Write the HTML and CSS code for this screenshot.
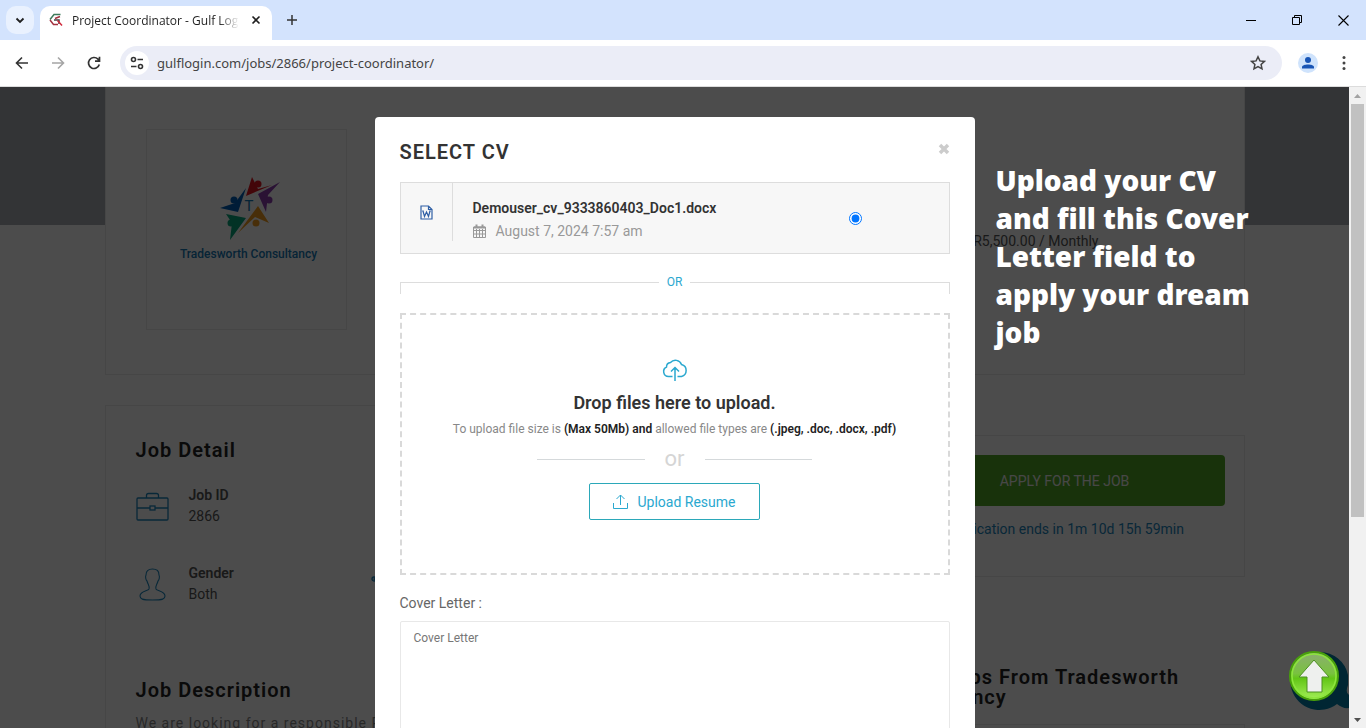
FILE: index.html
```html
<!DOCTYPE html>
<html lang="en">
<head>
  <meta charset="UTF-8">
  <meta name="viewport" content="width=device-width, initial-scale=1.0">
  <title>Project Coordinator - Gulf Login</title>
  <link rel="stylesheet" href="styles.css">
</head>
<body>
  <!-- Browser tabs -->
  <div class="tab-strip">
    <button class="tab-search" aria-label="Search tabs">
      <svg width="10" height="10" viewBox="0 0 10 10"><path d="M1.500 3.500 5 7l3.500-3.500" fill="none" stroke="#1f1f1f" stroke-width="1.800"/></svg>
    </button>
    <div class="tab">
      <svg width="14" height="14" viewBox="0 0 14 14" fill="none" stroke-width="1.500">
        <path d="M11.500 1.500H5L1 6.500" stroke="#3d7a5a"/>
        <path d="M11 3.500 6 5.500M1 7l3.500 4.500H9" stroke="#a33340"/>
        <path d="M5 7h5v4" stroke="#444"/>
        <path d="m8.500 7.500 4.500 5" stroke="#d0283a"/>
      </svg>
      <span class="tab-title">Project Coordinator - Gulf Login</span>
      <button class="tab-close" aria-label="Close tab">
        <svg width="10" height="10" viewBox="0 0 10 10"><path d="m1.500 1.500 7 7m0-7-7 7" stroke="#1f1f1f" stroke-width="1.600"/></svg>
      </button>
    </div>
    <button class="new-tab" aria-label="New tab">
      <svg width="12" height="12" viewBox="0 0 12 12"><path d="M6 1v10M1 6h10" stroke="#333" stroke-width="1.500"/></svg>
    </button>
    <div class="window-buttons">
      <button aria-label="Minimize"><svg width="10" height="10" viewBox="0 0 10 10"><path d="M0 5.500h10" stroke="#000"/></svg></button>
      <button aria-label="Restore"><svg width="10" height="10" viewBox="0 0 10 10" fill="none" stroke="#000"><path d="M.5 2.500h7v7h-7zM2.500 2.500v-2h7v7h-2"/></svg></button>
      <button aria-label="Close"><svg width="11" height="11" viewBox="0 0 11 11"><path d="m.5.5 10 10m0-10-10 10" stroke="#000" stroke-width="1.100"/></svg></button>
    </div>
  </div>

  <!-- Browser toolbar -->
  <div class="toolbar">
    <button class="nav-button" aria-label="Back">
      <svg width="14" height="14" viewBox="0 0 14 14" fill="none" stroke="#333" stroke-width="1.600"><path d="M13 7H2M7 1.500 1.500 7 7 12.500"/></svg>
    </button>
    <button class="nav-button" aria-label="Forward">
      <svg width="14" height="14" viewBox="0 0 14 14" fill="none" stroke="#a5a5a5" stroke-width="1.600"><path d="M1 7h11M7 1.500 12.500 7 7 12.500"/></svg>
    </button>
    <button class="nav-button" aria-label="Reload">
      <svg width="14" height="14" viewBox="0 0 14 14" fill="none" stroke="#333" stroke-width="1.700"><path d="M12.300 8.500A5.500 5.500 0 1 1 11 3.200L12.500 5M12.500.8V5.200H8"/></svg>
    </button>
    <div class="address">
      <button class="site-info" aria-label="Site information">
        <svg width="14" height="14" viewBox="0 0 14 14" fill="none" stroke="#333" stroke-width="1.600"><circle cx="3.500" cy="3.500" r="2"/><path d="M7.500 3.500H13M1 10.500h5.500"/><circle cx="10.500" cy="10.500" r="2"/></svg>
      </button>
      <input class="url" type="text" aria-label="Address" value="gulflogin.com/jobs/2866/project-coordinator/">
      <button class="star" aria-label="Bookmark">
        <svg width="16" height="16" viewBox="0 0 16 16"><path d="m8 1.800 1.900 4.100 4.500.5-3.300 3 .9 4.500L8 11.600l-4 2.300.9-4.500-3.300-3 4.500-.5z" fill="none" stroke="#444" stroke-width="1.500"/></svg>
      </button>
    </div>
    <button class="profile" aria-label="Profile">
      <svg width="20" height="20" viewBox="0 0 20 20"><circle cx="10" cy="10" r="10" fill="#cfe3fc"/><circle cx="10" cy="7" r="3" fill="#1754b5"/><path d="M4 15.500v-1.500c0-3.500 12-3.500 12 0v1.500z" fill="#1754b5"/></svg>
    </button>
    <button class="menu" aria-label="Menu">
      <svg width="4" height="16" viewBox="0 0 4 16" fill="#444"><circle cx="2" cy="2.500" r="1.500"/><circle cx="2" cy="8" r="1.500"/><circle cx="2" cy="13.500" r="1.500"/></svg>
    </button>
  </div>

  <div class="viewport">
    <div class="page">
      <div class="hero card">
        <div class="company">
          <svg width="62" height="64" viewBox="0 0 62 64">
            <path d="M32 0 26 19 52 8 38 12z" fill="#e0141f"/><circle cx="38" cy="7" r="3.500" fill="#e0141f"/>
            <path d="M60 5 38 17l8 18 2-17z" fill="#8e3fb0"/><circle cx="49" cy="23" r="3.500" fill="#8e3fb0"/>
            <path d="M26 11 18 35 0 31l15-5z" fill="#0060b8"/><circle cx="14" cy="23" r="3.500" fill="#0060b8"/>
            <path d="m6 37 20 4L10 63l2-17z" fill="#08a87c"/><circle cx="11" cy="46" r="3.500" fill="#08a87c"/>
            <path d="M38 29 49 46 35 40 18 56z" fill="#f09c1e"/><circle cx="36" cy="46" r="3.500" fill="#f09c1e"/>
            <text x="29" y="34" text-anchor="middle" font-family="Roboto" font-size="15" fill="#1578b4">T</text>
          </svg>
          <span class="company-name">Tradesworth Consultancy</span>
        </div>
        <span class="salary">INR5,500.00 / Monthly</span>
      </div>

      <div class="columns">
        <div class="main-column card">
          <h2>Job Detail</h2>
          <div class="details">
            <div class="detail">
              <svg width="33" height="33" viewBox="0 0 33 33" fill="none" stroke="#1d86bd" stroke-width="1.300"><rect x="1" y="8" width="31" height="22" rx="1"/><path d="M10.500 8V5.500q0-2 2-2h8q2 0 2 2V8M1 18h13m5 0h13"/><rect x="14" y="16" width="5" height="4"/></svg>
              <div><strong>Job ID</strong><br>2866</div>
            </div>
            <div class="detail gender">
              <svg width="33" height="33" viewBox="0 0 33 33" fill="none" stroke="#1d86bd" stroke-width="1.100"><path d="M16.500 1C12 1 10 3 10 7c-1 2 0 5 1 6 1 4 3 5 2 8-1 2-9 2-9 7 0 3 2 4 12.500 4S29 31 29 28c0-5-8-5-9-7-1-3 1-4 2-8 1-1 2-4 1-6 0-4-2-6-6.500-6z"/></svg>
              <div><strong>Gender</strong><br>Both</div>
            </div>
            <div class="detail qualification">
              <svg width="33" height="33" viewBox="0 0 33 33" fill="none" stroke="#1d86bd" stroke-width="1.300"><path d="m3 11 14-7 15 7-15 7zM7 15v8q9 6 18 0v-8"/><circle cx="3" cy="11" r="2"/></svg>
            </div>
          </div>
          <h2>Job Description</h2>
          <p class="description">We are looking for a responsible Project Coordinator</p>
        </div>
        <div class="side-column">
          <div class="apply card">
            <button class="apply-button">APPLY FOR THE JOB</button>
            <p>Application ends in 1m 10d 15h 59min</p>
          </div>
          <h2>Other Jobs From Tradesworth Consultancy</h2>
          <div class="other-jobs card"></div>
        </div>
      </div>

      <svg class="chat" width="60" height="60" viewBox="0 0 60 60"><path d="M31 0a29 29 0 1 0 17 52q6 5 12 4V43q-4-2-1-10V23A29 29 0 0 0 31 0z" fill="#007fac"/></svg>

      <!-- Apply popup -->
      <div class="overlay">
        <form class="modal">
          <div class="modal-header">
            <h3>SELECT CV</h3>
            <button type="button" class="modal-close" aria-label="Close">
              <svg width="12" height="12" viewBox="0 0 12 12"><path d="m2 2 8 8m0-8-8 8" stroke="#ccc" stroke-width="3.500"/></svg>
            </button>
          </div>

          <div class="cv">
            <div class="cv-icon">
              <svg width="13" height="15" viewBox="0 0 13 15" fill="none" stroke="#2f5fa5" stroke-width="1.200"><path d="M1 1h7.500L12 4.500V14H1zM8.500 1v3.500H12"/><path d="m3 6 1.500 5.500L6.500 7l2 4.500L10 6M2.200 6h1.600M9.200 6h1.600"/></svg>
            </div>
            <div class="cv-info">
              <label for="cv1">Demouser_cv_9333860403_Doc1.docx</label>
              <span class="cv-date">
                <svg width="13" height="14" viewBox="0 0 13 14" fill="none" stroke="#999"><path d="M.5 3h12v10.500H.5z"/><path d="M.5 6.500h12M.5 10h12M3.500 5v8.500M6.500 5v8.500M9.500 5v8.500"/><path d="M1 3.500h11" stroke-width="2"/><path d="M3.500.5v3M9.500.5v3" stroke-width="2"/></svg>
                August 7, 2024 7:57 am
              </span>
            </div>
            <input type="radio" id="cv1" name="cv" checked>
          </div>

          <div class="or-frame">
            <span class="frame-left"></span>
            <span class="frame-text">OR</span>
            <span class="frame-right"></span>
          </div>

          <div class="dropzone">
            <svg width="26" height="24" viewBox="0 0 26 24" fill="none" stroke="#2ba8cf" stroke-width="1.500"><path d="M10.500 18.500H6.500A5 5 0 0 1 4.500 9 4.500 4.500 0 0 1 8.500 4.500a6.500 6.500 0 0 1 11 2 6.200 6.200 0 0 1 0 12h-4M13 23V9.500M9 13.500l4-4 4 4"/></svg>
            <h4>Drop files here to upload.</h4>
            <p>To upload file size is <strong>(Max 50Mb) and</strong> allowed file types are <strong>(.jpeg, .doc, .docx, .pdf)</strong></p>
            <div class="or-line"><span>or</span></div>
            <button type="button" class="upload-button">
              <svg width="15" height="15" viewBox="0 0 15 15" fill="none" stroke="#2ba8cf"><path d="M.5 9v5.500h14V9M7.500 11V1M3.500 5l4-4 4 4"/></svg>
              Upload Resume
            </button>
          </div>

          <label class="letter-label" for="letter">Cover Letter :</label>
          <textarea id="letter" placeholder="Cover Letter"></textarea>
        </form>
      </div>

      <p class="hint">Upload your CV and fill this Cover Letter field to apply your dream job</p>

      <a class="back-to-top" href="#" aria-label="Back to top">
        <svg width="50" height="52" viewBox="0 0 50 52">
          <defs>
            <linearGradient id="ball" x1="0" y1="0" x2="0" y2="1"><stop offset="0" stop-color="#8cad72"/><stop offset=".45" stop-color="#79c23f"/><stop offset=".55" stop-color="#62c516"/><stop offset="1" stop-color="#a5f05a"/></linearGradient>
          </defs>
          <circle cx="25" cy="26" r="24" fill="url(#ball)" stroke="#48a00b" stroke-width="2"/>
          <circle cx="25" cy="26" r="22" fill="none" stroke="#8ce63b" stroke-width="1.500"/>
          <path d="M25 10 10 27h8v15h15V27h7z" fill="#eef0ee" stroke="#4d8f23"/>
        </svg>
      </a>
    </div>

    <div class="scrollbar">
      <svg width="17" height="17" viewBox="0 0 17 17"><path d="m5 11 3.500-4 3.500 4z" fill="#a3a3a3"/></svg>
      <div class="track"><div class="thumb"></div></div>
      <svg width="17" height="17" viewBox="0 0 17 17"><path d="m5 7 3.500 4L12 7z" fill="#505050"/></svg>
    </div>
  </div>
</body>
</html>
```
FILE: styles.css
```css
* {
  box-sizing: border-box;
}
body {
  margin: 0;
  height: 100vh;
  display: flex;
  flex-direction: column;
  overflow: hidden;
  font-family: Roboto, Arial, sans-serif;
  font-size: 14px;
  color: #666;
}
button {
  font-family: inherit;
  border: none;
  background: none;
  padding: 0;
  cursor: pointer;
}
svg {
  display: block;
  flex-shrink: 0;
}
h2, h3, h4, p {
  margin: 0;
}

/* browser */
.tab-strip {
  display: flex;
  height: 40px;
  padding-left: 6px;
  background-color: #d3e3fd;
}
.tab-search {
  display: grid;
  place-items: center;
  width: 28px;
  height: 28px;
  margin: 6px 6px 0 0;
  border-radius: 10px;
  background-color: #e9f1fe;
}
.tab {
  display: flex;
  align-items: center;
  width: 232px;
  margin-top: 6px;
  padding: 0 11px 6px 9px;
  border-radius: 10px 10px 0 0;
  background-color: #fff;
  font-family: "Open Sans", sans-serif;
  font-size: 12px;
  color: #1f1f1f;
}
.tab-title {
  flex: 1;
  margin-left: 9px;
  overflow: hidden;
  white-space: nowrap;
  -webkit-mask-image: linear-gradient(to right, #000 88%, transparent);
  mask-image: linear-gradient(to right, #000 88%, transparent);
}
.tab-close {
  margin-left: 12px;
}
.new-tab {
  margin-left: 14px;
}
.window-buttons {
  display: flex;
  margin-left: auto;
}
.window-buttons button {
  display: grid;
  place-items: center;
  width: 46px;
}
.toolbar {
  display: flex;
  align-items: center;
  height: 47px;
  padding: 0 20px 0 4px;
  border-bottom: 1px solid #dcdcdc;
  background-color: #fff;
}
.nav-button {
  display: grid;
  place-items: center;
  width: 36px;
}
.address {
  display: flex;
  flex: 1;
  align-items: center;
  height: 34px;
  margin-left: 8px;
  padding: 0 16px 0 5px;
  border-radius: 17px;
  background-color: #ebedf7;
}
.site-info {
  display: grid;
  place-items: center;
  width: 24px;
  height: 24px;
  border-radius: 50%;
  background-color: #fff;
}
.url {
  flex: 1;
  margin-left: 8px;
  padding: 0;
  border: none;
  background: none;
  font-family: "Noto Sans", sans-serif;
  font-size: 13px;
  color: #444;
}
.profile {
  margin: 0 24px 0 16px;
}
.viewport {
  display: flex;
  flex: 1;
  min-height: 0;
}
.scrollbar {
  display: flex;
  flex-direction: column;
  width: 17px;
  background-color: #f1f1f1;
}
.track {
  flex: 1;
  padding: 0 2px;
}
.thumb {
  height: 68%;
  background-color: #c1c1c1;
}

/* job page */
.page {
  position: relative;
  flex: 1;
  overflow: hidden;
  background: linear-gradient(#aab0b6, #aab0b6) no-repeat 0 0 / 100% 138px #fff;
}
.card {
  border: 1px solid #ececec;
  background-color: #fff;
}
.hero {
  display: flex;
  justify-content: space-between;
  align-items: center;
  max-width: 1140px;
  margin: 0 auto;
  padding: 42px 145px 44px 40px;
  border-top: none;
}
.company {
  display: flex;
  flex-direction: column;
  align-items: center;
  gap: 6px;
  width: 201px;
  height: 201px;
  padding: 47px 0 0 5px;
  border: 1px solid #ececec;
}
.company svg {
  margin-left: 4px;
}
.company-name {
  font-size: 12px;
  font-weight: 500;
  color: #1578b4;
}
.salary {
  margin-top: 22px;
  color: #555;
}
.columns {
  display: flex;
  gap: 30px;
  max-width: 1140px;
  margin: 30px auto 0;
}
h2 {
  font-size: 20px;
  font-weight: 600;
  line-height: 20px;
  letter-spacing: 1px;
  color: #222;
}
.main-column {
  flex: 1;
  padding: 34px 30px;
}
.details {
  display: grid;
  grid-template-columns: repeat(3, 1fr);
  row-gap: 36px;
  margin: 25px 0 75px;
}
.detail {
  display: flex;
  align-items: center;
  gap: 20px;
  line-height: 21px;
  color: #555;
}
.detail strong {
  font-weight: 600;
}
.gender {
  grid-column: 1;
}
.qualification {
  padding-left: 6px;
}
.description {
  margin-top: 13px;
  line-height: 20px;
  letter-spacing: 1px;
  white-space: nowrap;
  color: #888;
}
.side-column {
  width: 360px;
  padding-top: 30px;
}
.apply {
  padding: 19px 19px 37px;
  margin-bottom: 90px;
  text-align: center;
}
.apply-button {
  width: 100%;
  height: 51px;
  border-radius: 4px;
  background-color: #51a825;
  color: #eee;
  font-size: 14px;
}
.apply p {
  margin-top: 13px;
  line-height: 20px;
  color: #1d86bd;
}
.other-jobs {
  height: 100px;
  margin-top: 17px;
}
.chat {
  position: absolute;
  right: 0;
  bottom: 16px;
}

/* popup */
.overlay {
  position: absolute;
  inset: 0;
  background-color: rgba(0, 0, 0, 0.7);
}
.modal {
  max-width: 600px;
  margin: 30px auto 0;
  padding: 23px 25px 40px;
  border-radius: 4px;
  background-color: #fff;
}
.modal-header {
  display: flex;
  justify-content: space-between;
  margin-bottom: 18px;
}
h3 {
  font-size: 20px;
  font-weight: 600;
  line-height: 24px;
  letter-spacing: 1px;
  color: #333;
}
.modal-close {
  align-self: flex-start;
  padding-top: 3px;
}
.cv {
  display: flex;
  height: 72px;
  border: 1px solid #ddd;
  background-color: #f7f7f7;
}
.cv-icon {
  display: grid;
  place-items: center;
  width: 52px;
  height: 58px;
  border-right: 1px solid #ddd;
}
.cv-info {
  display: flex;
  flex: 1;
  flex-direction: column;
  gap: 3px;
  padding: 15px 0 0 20px;
  line-height: 20px;
}
.cv-info label {
  font-weight: 600;
  color: #333;
}
.cv-date {
  display: flex;
  align-items: center;
  gap: 10px;
  color: #999;
}
.cv input {
  align-self: center;
  margin: 0 87px 0 0;
}
.or-frame {
  display: flex;
  align-items: flex-end;
  gap: 8px;
  height: 20px;
  margin: 20px 0 19px;
}
.frame-left, .frame-right {
  flex: 1;
  height: 12px;
  border-top: 1px solid #ddd;
}
.frame-left {
  border-left: 1px solid #ddd;
}
.frame-right {
  border-right: 1px solid #ddd;
}
.frame-text {
  align-self: flex-start;
  line-height: 16px;
  font-size: 12px;
  color: #2ba8cf;
}
.dropzone {
  display: flex;
  flex-direction: column;
  align-items: center;
  padding: 43px 20px 53px;
  border: 2px dashed #d9d9d9;
}
h4 {
  margin-top: 9px;
  font-size: 18px;
  font-weight: 600;
  line-height: 24px;
  color: #333;
}
.dropzone p {
  margin-top: 4px;
  font-size: 12px;
  line-height: 20px;
  color: #888;
}
.dropzone p strong {
  font-weight: 600;
  color: #222;
}
.or-line {
  display: flex;
  align-items: center;
  gap: 20px;
  width: 275px;
  margin: 6px 0 10px;
  font-size: 22px;
  line-height: 28px;
  color: #d5d5d5;
}
.or-line::before, .or-line::after {
  content: "";
  flex: 1;
  height: 1px;
  background-color: #d5d9db;
}
.upload-button {
  display: flex;
  align-items: center;
  gap: 9px;
  height: 37px;
  padding: 0 23px;
  border: 1px solid #2ba8b9;
  border-radius: 2px;
  font-size: 14px;
  color: #2ba8cf;
}
.letter-label {
  display: block;
  margin: 18px 0 8px;
  line-height: 20px;
}
textarea {
  display: block;
  width: 100%;
  height: 150px;
  padding: 9px 13px;
  border: 1px solid #e8e8e8;
  border-radius: 2px;
  resize: none;
  font-family: inherit;
  font-size: 12px;
}
textarea::placeholder {
  color: #777;
}
.hint {
  position: absolute;
  top: 74px;
  left: calc(50% + 321px);
  width: 268px;
  font-family: "Noto Sans", "Arial Black", sans-serif;
  font-size: 28px;
  font-weight: 900;
  line-height: 38px;
  color: #fff;
}
.back-to-top {
  position: absolute;
  right: 10px;
  bottom: 26px;
}
```
